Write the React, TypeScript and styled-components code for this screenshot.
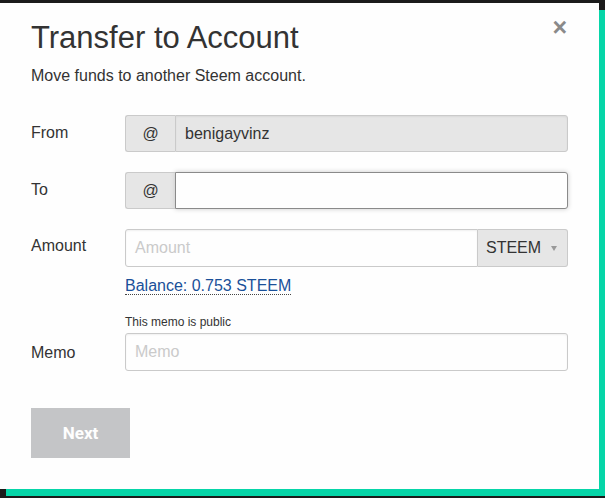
import React from 'react';
import styled, { createGlobalStyle } from 'styled-components';

const GlobalStyle = createGlobalStyle`
  html, body {
    margin: 0;
    padding: 0;
    background: #1b1b1b;
  }
  body {
    font-family: "Liberation Sans", Arial, sans-serif;
    color: #333;
  }
`;

const Page = styled.div`
  width: 605px;
  height: 498px;
  padding-top: 3px;
  box-sizing: border-box;
  overflow: hidden;
`;

const Modal = styled.div`
  position: relative;
  width: 599px;
  height: 486px;
  box-sizing: border-box;
  background: #fefefe;
  box-shadow: 6px 7px 0 #06d5a8;
  padding: 15px 31px 0 31px;
`;

const Close = styled.button`
  position: absolute;
  top: 12px;
  right: 32px;
  border: 0;
  background: none;
  padding: 0;
  font-family: "Liberation Sans", Arial, sans-serif;
  font-size: 25px;
  font-weight: bold;
  line-height: 1;
  color: #8a8a8a;
  cursor: pointer;
`;

const Title = styled.h1`
  margin: 0;
  font-size: 31px;
  font-weight: normal;
  line-height: 40px;
  color: #333;
`;

const Subtitle = styled.p`
  margin: 8px 0 0;
  font-size: 16px;
  line-height: 20px;
  color: #333;
`;

const Form = styled.div`
  margin-top: 29px;
  display: grid;
  grid-template-columns: 94px 1fr;
  align-items: center;
`;

const Label = styled.div`
  font-size: 16px;
  color: #333;
  padding-bottom: 2px;
`;

const Row = styled.div<{ $gap: number }>`
  display: contents;
  & > * {
    margin-bottom: ${(p) => p.$gap}px;
  }
`;

const Group = styled.div<{ $h?: number }>`
  display: flex;
  height: ${(p) => p.$h ?? 37}px;
`;

const Addon = styled.span`
  width: 50px;
  box-sizing: border-box;
  display: flex;
  align-items: center;
  justify-content: center;
  background: #e6e6e6;
  border: 1px solid #cacaca;
  border-right: 0;
  border-radius: 3px 0 0 3px;
  font-size: 16px;
  color: #333;
`;

const Field = styled.div<{ $disabled?: boolean; $focus?: boolean; $left?: boolean; $right?: boolean; $placeholder?: boolean }>`
  flex: 1;
  box-sizing: border-box;
  display: flex;
  align-items: center;
  padding: 0 9px;
  font-size: 16px;
  color: ${(p) => (p.$placeholder ? '#cacaca' : '#333')};
  background: ${(p) => (p.$disabled ? '#e6e6e6' : '#fefefe')};
  border: 1px solid ${(p) => (p.$focus ? '#8a8a8a' : '#cacaca')};
  border-radius: ${(p) => (p.$left ? '3px' : '0')} ${(p) => (p.$right ? '3px 3px' : '0 0')} ${(p) => (p.$left ? '3px' : '0')};
  box-shadow: ${(p) => (p.$focus ? '0 0 5px #cacaca' : 'inset 0 1px 2px rgba(10,10,10,0.06)')};
`;

const Select = styled.div`
  width: 90px;
  box-sizing: border-box;
  display: flex;
  align-items: center;
  justify-content: space-between;
  padding: 0 10px 0 8px;
  background: #e6e6e6;
  border: 1px solid #cacaca;
  border-left: 0;
  border-radius: 0 3px 3px 0;
  font-size: 16px;
  color: #333;
`;

const Caret = styled.span`
  width: 0;
  height: 0;
  border-left: 3.5px solid transparent;
  border-right: 3.5px solid transparent;
  border-top: 5px solid #999;
  margin-top: 1px;
`;

const Stack = styled.div`
  display: flex;
  flex-direction: column;
`;

const Balance = styled.a`
  align-self: flex-start;
  margin-top: 10px;
  font-size: 16px;
  color: #1a5099;
  text-decoration: none;
  border-bottom: 1px dotted #444;
  line-height: 17px;
`;

const Hint = styled.div`
  font-size: 12px;
  color: #333;
  margin-bottom: 4px;
`;

const NextButton = styled.button`
  margin-top: 37px;
  width: 99px;
  height: 50px;
  border: 0;
  background: #c4c5c7;
  color: #fefefe;
  font-family: Roboto, "Liberation Sans", Arial, sans-serif;
  font-weight: bold;
  font-size: 17px;
  cursor: not-allowed;
`;

const AmountLabel = styled(Label)`
  align-self: start;
  margin-top: 8px;
`;

const MemoLabel = styled(Label)`
  align-self: end;
  margin-bottom: 7px;
`;

export default function App() {
  return (
    <Page>
      <GlobalStyle />
      <Modal>
        <Close aria-label="Close">×</Close>
        <Title>Transfer to Account</Title>
        <Subtitle>Move funds to another Steem account.</Subtitle>
        <Form>
          <Row $gap={20}>
            <Label>From</Label>
            <Group>
              <Addon>@</Addon>
              <Field $disabled $right>benigayvinz</Field>
            </Group>
          </Row>
          <Row $gap={20}>
            <Label>To</Label>
            <Group>
              <Addon>@</Addon>
              <Field $focus $right />
            </Group>
          </Row>
          <Row $gap={20}>
            <AmountLabel>Amount</AmountLabel>
            <Stack>
              <Group $h={38}>
                <Field $left $placeholder>Amount</Field>
                <Select>
                  STEEM <Caret />
                </Select>
              </Group>
              <Balance>Balance: 0.753 STEEM</Balance>
            </Stack>
          </Row>
          <Row $gap={0}>
            <MemoLabel>Memo</MemoLabel>
            <Stack>
              <Hint>This memo is public</Hint>
              <Group $h={38}>
                <Field $left $right $placeholder>Memo</Field>
              </Group>
            </Stack>
          </Row>
        </Form>
        <NextButton>Next</NextButton>
      </Modal>
    </Page>
  );
}
